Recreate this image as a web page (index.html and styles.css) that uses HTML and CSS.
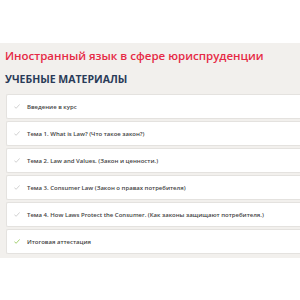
FILE: index.html
```html
<!DOCTYPE html>
<html lang="ru">
<head>
    <meta charset="UTF-8">
    <meta name="viewport" content="width=device-width, initial-scale=1.0">
    <title>Учебные материалы</title>
    <link rel="stylesheet" href="styles.css">
</head>
<body>
    <div class="topbar"></div>

    <section class="course">
        <h1 class="course__title">Иностранный язык в сфере юриспруденции</h1>
        <h2 class="course__subtitle">УЧЕБНЫЕ МАТЕРИАЛЫ</h2>

        <ul class="lessons">
            <li class="lesson">
                <svg class="lesson__check" viewBox="0 0 10 8"><polyline points="1,4.5 3.5,7 9,1" /></svg>
                <span>Введение в курс</span>
            </li>
            <li class="lesson">
                <svg class="lesson__check" viewBox="0 0 10 8"><polyline points="1,4.5 3.5,7 9,1" /></svg>
                <span>Тема 1. What is Law? (Что такое закон?)</span>
            </li>
            <li class="lesson">
                <svg class="lesson__check" viewBox="0 0 10 8"><polyline points="1,4.5 3.5,7 9,1" /></svg>
                <span>Тема 2. Law and Values. (Закон и ценности.)</span>
            </li>
            <li class="lesson">
                <svg class="lesson__check" viewBox="0 0 10 8"><polyline points="1,4.5 3.5,7 9,1" /></svg>
                <span>Тема 3. Consumer Law (Закон о правах потребителя)</span>
            </li>
            <li class="lesson">
                <svg class="lesson__check" viewBox="0 0 10 8"><polyline points="1,4.5 3.5,7 9,1" /></svg>
                <span>Тема 4. How Laws Protect the Consumer. (Как законы защищают потребителя.)</span>
            </li>
            <li class="lesson lesson--done">
                <svg class="lesson__check" viewBox="0 0 10 8"><polyline points="1,4.5 3.5,7 9,1" /></svg>
                <span>Итоговая аттестация</span>
            </li>
        </ul>
    </section>
</body>
</html>
```

FILE: styles.css
```css
* {
	box-sizing: border-box;
	margin: 0;
	padding: 0;
}

:root {
	--panel: #f2f0ed;
	--card: #ffffff;
	--line: #e4e2df;
	--red: #e62a45;
	--navy: #2a3b58;
	--text: #444444;
	--muted: #c4c4c4;
	--green: #8bc34a;
}

body {
	background-color: #ffffff;
	font-family: "Open Sans", "Liberation Sans", sans-serif;
}

.topbar {
	height: 43px;
}

/* panel continues past the right edge, so cards have no right border */
.course {
	background-color: var(--panel);
	padding: 5px 0 4px 5px;
}

.course__title {
	color: var(--red);
	font-size: 11.5px;
	font-weight: 600;
	line-height: 16px;
}

.course__subtitle {
	color: var(--navy);
	font-size: 10.5px;
	font-weight: 700;
	line-height: 14px;
	margin-top: 8px;
}

.lessons {
	list-style: none;
	margin-top: 8px;
	padding-left: 1px;
	display: flex;
	flex-direction: column;
	gap: 2px;
}

.lesson {
	background-color: var(--card);
	border: 1px solid var(--line);
	border-right: 0;
	border-radius: 2px 0 0 2px;
	height: 25px;
	display: flex;
	align-items: center;
	gap: 7px;
	padding-left: 7px;
	color: var(--text);
	font-size: 6px;
	font-weight: 600;

	span {
		white-space: nowrap;
	}
}

.lesson__check {
	width: 6px;
	height: 5px;
	flex-shrink: 0;

	polyline {
		fill: none;
		stroke: var(--muted);
		stroke-width: 1.3;
		stroke-linecap: round;
		stroke-linejoin: round;
	}
}

.lesson--done .lesson__check polyline {
	stroke: var(--green);
}
```
